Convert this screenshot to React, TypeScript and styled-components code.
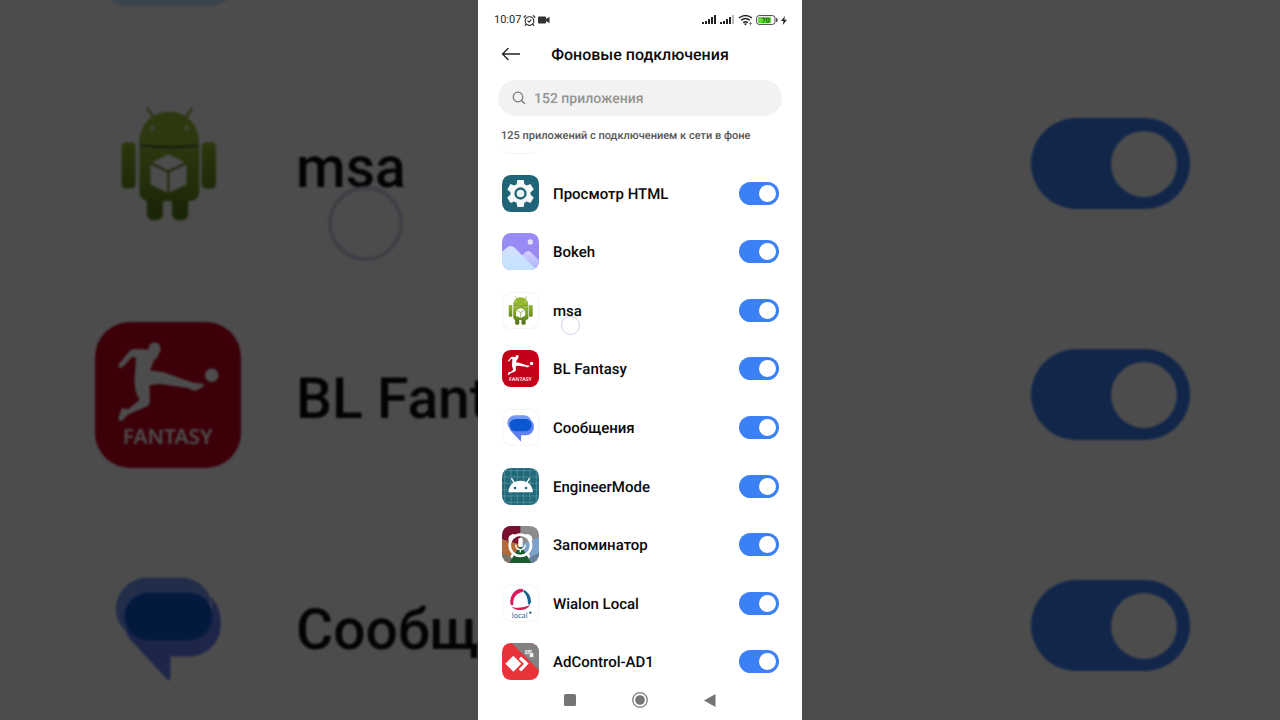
import React from "react";
import styled, { createGlobalStyle, css } from "styled-components";
import { AlarmClockCheck } from "lucide-react";

const GlobalStyle = createGlobalStyle`
  *, *::before, *::after { box-sizing: border-box; }
  body {
    margin: 0;
    background: #4c4c4c;
    font-family: Roboto, "Noto Sans", sans-serif;
    text-rendering: geometricPrecision;
    color: #0a0a0a;
  }
  button, input { font: inherit; text-rendering: inherit; }
`;

/* ---------- App icons ---------- */

const IconFrame = styled.svg<{ $outlined?: boolean }>`
  display: block;
  flex: none;
  width: var(--icon);
  height: var(--icon);
  border-radius: 24%;
  ${(p) => p.$outlined && css`box-shadow: inset 0 0 0 var(--outline) #f5f5f5;`}
`;

const GearIcon = () => (
  <IconFrame viewBox="0 0 111 111">
    <rect width="111" height="111" fill="#1f6577" />
    <path
      transform="translate(5.100 5.100) scale(4.200)"
      fill="#f6f8f9"
      d="M19.14 12.94c.04-.3.06-.61.06-.94 0-.32-.02-.64-.07-.94l2.03-1.58c.18-.14.23-.41.12-.61l-1.92-3.32c-.12-.22-.37-.29-.59-.22l-2.39.96c-.5-.38-1.03-.7-1.62-.94l-.36-2.54c-.04-.24-.24-.41-.48-.41h-3.84c-.24 0-.43.17-.47.41l-.36 2.54c-.59.24-1.13.57-1.62.94l-2.39-.96c-.22-.08-.47 0-.59.22L2.74 8.87c-.12.21-.08.47.12.61l2.03 1.58c-.05.3-.09.63-.09.94s.02.64.07.94l-2.03 1.58c-.18.14-.23.41-.12.61l1.92 3.32c.12.22.37.29.59.22l2.39-.96c.5.38 1.03.7 1.62.94l.36 2.54c.05.24.24.41.48.41h3.84c.24 0 .44-.17.47-.41l.36-2.54c.59-.24 1.13-.56 1.62-.94l2.39.96c.22.08.47 0 .59-.22l1.92-3.32c.12-.22.07-.47-.12-.61l-2.01-1.58z"
    />
    <circle cx="55.5" cy="55.5" r="15" fill="#eef3f5" stroke="#1f6577" strokeWidth="7" />
  </IconFrame>
);

const BokehIcon = () => (
  <IconFrame viewBox="0 0 111 111">
    <defs>
      <linearGradient id="sky" x1="0" y1="0" x2="1" y2="1">
        <stop offset="0" stopColor="#968df6" />
        <stop offset="1" stopColor="#9c86f2" />
      </linearGradient>
      <linearGradient id="peak" x1="0" y1="0" x2="0" y2="1">
        <stop offset="0" stopColor="#d3e1ff" />
        <stop offset="1" stopColor="#c3e2fd" />
      </linearGradient>
      <linearGradient id="rear" x1="0" y1="0" x2="0" y2="1">
        <stop offset="0" stopColor="#d6ccff" />
        <stop offset="1" stopColor="#a9b4fb" />
      </linearGradient>
    </defs>
    <rect width="111" height="111" fill="url(#sky)" />
    <path d="M40 90 68 59Q77 49 87 58L111 82V111H40Z" fill="url(#rear)" />
    <path d="M0 56 16 43Q27 34 38 44L104 111H0Z" fill="url(#peak)" />
    <circle cx="85" cy="27" r="8" fill="#e6defe" />
  </IconFrame>
);

const RobotIcon = () => (
  <IconFrame viewBox="0 0 434 434" $outlined>
    <defs>
      <linearGradient id="robot" x1="0" y1="0" x2="0" y2="1">
        <stop offset="0" stopColor="#93b82f" />
        <stop offset="1" stopColor="#648a1c" />
      </linearGradient>
    </defs>
    <path d="M157 53 177 82M287 53 268 82" stroke="#83a32c" strokeWidth="7" strokeLinecap="round" />
    <rect x="154" y="305" width="48" height="79" rx="18" fill="#5b7b1a" />
    <rect x="229" y="305" width="48" height="79" rx="18" fill="#5b7b1a" />
    <rect x="79" y="152" width="42" height="138" rx="14" fill="url(#robot)" />
    <rect x="317" y="152" width="43" height="138" rx="14" fill="url(#robot)" />
    <path d="M131 156C131 95 175 62 220 62S309 95 309 156Q300 166 220 166T131 156Z" fill="#94b92e" />
    <path d="M132 166Q220 174 310 166V296Q310 328 278 328H164Q132 328 132 296Z" fill="url(#robot)" />
    <path d="M132 159Q220 169 309 159V165Q220 175 132 165Z" fill="#3c5410" />
    <circle cx="170" cy="110" r="8" fill="#cfe0a4" />
    <circle cx="272" cy="110" r="8" fill="#cfe0a4" />
    <path d="M218 188 272 214V278L218 304 165 278V214Z" fill="#fff" />
    <path d="M165 214 218 240 272 214M218 240V304" fill="none" stroke="#5d7d1b" strokeWidth="6" />
  </IconFrame>
);

const FantasyIcon = () => (
  <IconFrame viewBox="0 0 434 434">
    <rect width="434" height="434" fill="#c30019" />
    <ellipse cx="177" cy="80" rx="18" ry="20" fill="#fff" />
    <path
      d="M70 126 100 90Q106 80 120 80L160 82 172 94 190 94 184 108 176 112 164 144 202 149 290 180 324 184Q324 194 314 196L297 206 277 196 192 184 162 188 163 236Q163 246 152 252L97 276 80 294Q72 296 69 287L80 256 98 260 132 232Q114 200 118 160L122 106 110 104 84 132 72 138Z"
      fill="#fff"
    />
    <circle cx="347" cy="158" r="20" fill="#fff" />
    <text x="216" y="364" textAnchor="middle" fontFamily="'Noto Sans', sans-serif" fontWeight="600" fontSize="62" fill="#fff">
      FANTASY
    </text>
  </IconFrame>
);

const MessagesIcon = () => (
  <IconFrame viewBox="0 0 434 434" $outlined>
    <path d="M156 73H255A94 94 0 0 1 341 129L349 180 90 232Q62 205 62 167A94 94 0 0 1 156 73Z" fill="#7297f6" />
    <path d="M341 129Q374 155 374 213A95 95 0 0 1 279 308H224V370Q224 384 214 375L100 252 90 232 200 200 340 200Q356 160 341 129Z" fill="#5f80f3" />
    <rect x="87" y="118" width="262" height="142" rx="71" fill="#0a57cf" />
  </IconFrame>
);

const EngineerIcon = () => (
  <IconFrame viewBox="0 0 111 111">
    <rect width="111" height="111" fill="#21687a" />
    <path
      d="M8 0V111M27 0V111M46 0V111M65 0V111M84 0V111M103 0V111M0 8H111M0 27H111M0 46H111M0 65H111M0 84H111M0 103H111"
      stroke="#5c97a4"
      strokeWidth="2"
    />
    <path d="M29 32 38 46M82 32 73 46" stroke="#fff" strokeWidth="4" strokeLinecap="round" />
    <path d="M19 73C21 49 36 38 56 38S91 49 93 73Z" fill="#fff" />
    <circle cx="39" cy="60" r="4" fill="#21687a" />
    <circle cx="72" cy="60" r="4" fill="#21687a" />
  </IconFrame>
);

const ReminderIcon = () => (
  <IconFrame viewBox="0 0 111 111">
    <rect width="111" height="111" fill="#8d8c8c" />
    <path d="M0 0H55V56L0 40Z" fill="#7a1030" />
    <path d="M0 40 55 56 22 111H0Z" fill="#b56b39" />
    <path d="M0 82 32 92 22 111H0Z" fill="#777569" />
    <path d="M111 34 55 56 88 111H111Z" fill="#7fa0cb" />
    <path d="M111 82 80 94 88 111H111Z" fill="#687f9c" />
    <path d="M55 56 22 111H88Z" fill="#1b5b2f" />
    <circle cx="55" cy="58" r="32" fill="none" stroke="#fff" strokeWidth="8" />
    <path d="M19 42Q18 27 34 24L40 26 21 46ZM91 42Q92 27 76 24L70 26 89 46Z" fill="#fff" />
    <path d="M34 83 29 92M76 83 81 92" stroke="#fff" strokeWidth="7" strokeLinecap="round" />
    <rect x="49" y="35" width="13" height="29" rx="6" fill="#fff" />
    <path d="M41 56Q42 71 55 71T70 56M55 71V79" fill="none" stroke="#fff" strokeWidth="4" />
  </IconFrame>
);

const WialonIcon = () => (
  <IconFrame viewBox="0 0 111 111" $outlined>
    <path d="M60 11C38 10 22 34 25 56Q29 65 34 59C32 38 44 24 62 21Q66 14 60 11Z" fill="#dd1c5c" />
    <path d="M65 14C80 22 88 36 87 52Q83 64 78 56C78 40 73 28 64 20Z" fill="#17658f" />
    <path d="M29 65Q53 74 84 60Q76 73 58 75Q38 76 29 65Z" fill="#d5204f" />
    <text x="53" y="99" textAnchor="middle" fontFamily="'Noto Sans', sans-serif" fontSize="22" fill="#1f668c">
      local
    </text>
    <path d="M85 79V87M81 83H89" stroke="#1f668c" strokeWidth="3" />
  </IconFrame>
);

const AdControlIcon = () => (
  <IconFrame viewBox="0 0 111 111">
    <rect width="111" height="111" fill="#e73339" />
    <path d="M29 0H111V82Z" fill="#828282" />
    <path d="M34 38 58 62 34 86 10 62Z" fill="#fff" />
    <path d="M54 44 73 62 54 82" fill="none" stroke="#fff" strokeWidth="10" />
    <rect x="69" y="21" width="20" height="13" rx="2" fill="#dedede" />
    <rect x="82" y="29" width="13" height="14" rx="2" fill="#fff" stroke="#828282" strokeWidth="2" />
    <path d="M76 21V34M69 27H82M85 35H92" stroke="#828282" strokeWidth="1" />
  </IconFrame>
);

/* ---------- Shared list parts ---------- */

const Row = styled.label`
  display: flex;
  flex: 1 0 var(--row);
  align-items: center;
  gap: var(--gap);
`;

const Name = styled.span`
  position: relative;
  flex: 1;
  padding-top: var(--drop);
  font-size: var(--text);
  font-weight: 500;
  line-height: 1;
  white-space: nowrap;
`;

const TouchDot = styled.span`
  position: absolute;
  top: var(--dot-top);
  left: var(--dot-left);
  width: var(--dot);
  height: var(--dot);
  border: var(--dot-line) solid #cfcfe6;
  border-radius: 50%;
  background: rgba(255, 255, 255, 0.8);
`;

const Switch = styled.input.attrs({ type: "checkbox", role: "switch" })`
  appearance: none;
  display: flex;
  flex: none;
  align-items: center;
  width: var(--switch-w);
  height: var(--switch-h);
  margin: 0;
  padding: 0 var(--switch-pad);
  border-radius: var(--switch-h);
  background: #c9ccd1;
  cursor: pointer;

  &::before {
    content: "";
    width: var(--knob);
    height: var(--knob);
    border-radius: 50%;
    background: #fff;
  }
  &:checked {
    justify-content: flex-end;
    background: #3c80f6;
  }
`;

/* ---------- Page ---------- */

const Page = styled.div`
  display: grid;
  grid-template-columns: minmax(0, 1fr);
  min-height: 100vh;
  overflow: hidden;
  background: #4c4c4c;
`;

const Backdrop = styled.div`
  --row: 231px;
  --icon: 146px;
  --outline: 2px;
  --gap: 55px;
  --text: 57px;
  --drop: 8px;
  --switch-w: 159px;
  --switch-h: 91px;
  --switch-pad: 13px;
  --knob: 66px;
  --dot: 75px;
  --dot-top: 55px;
  --dot-left: 32px;
  --dot-line: 4px;

  grid-area: 1 / 1;
  display: flex;
  flex-direction: column;
  justify-content: flex-end;
  height: 100vh;
  margin-bottom: -21px;
  padding: 0 90px 0 95px;
  background: #fff;
  filter: brightness(0.3) blur(1px);
  transform: translateY(21px);
`;

const Phone = styled.main`
  --row: 44px;
  --icon: 37px;
  --outline: 1px;
  --gap: 14px;
  --text: 15px;
  --drop: 2px;
  --switch-w: 40px;
  --switch-h: 23px;
  --switch-pad: 3px;
  --knob: 17px;
  --dot: 19px;
  --dot-top: 14px;
  --dot-left: 8px;
  --dot-line: 1px;

  position: relative;
  grid-area: 1 / 1;
  justify-self: center;
  display: flex;
  flex-direction: column;
  width: min(100%, 324px);
  min-height: 100vh;
  background: #fff;
`;

const StatusBar = styled.div`
  display: flex;
  align-items: center;
  gap: 3px;
  height: 40px;
  padding: 0 15px 0 16px;
  color: #222;
`;

const StatusGroup = styled.div`
  display: flex;
  flex: 1;
  align-items: center;
  gap: 2px;
`;

const Clock = styled.time`
  font-size: 11px;
  line-height: 16px;
`;

const TopBar = styled.header`
  display: grid;
  grid-template-columns: 26px 1fr 26px;
  align-items: center;
  height: 30px;
  margin: 0 20px 10px;
`;

const Title = styled.h1`
  margin: 0;
  font-size: 16px;
  font-weight: 500;
  line-height: 20px;
  text-align: center;
  white-space: nowrap;
`;

const IconButton = styled.button`
  display: flex;
  align-items: center;
  justify-content: center;
  height: 18px;
  padding: 0;
  border: 0;
  background: none;
  color: #222;
  cursor: pointer;
`;

const SearchBox = styled.label`
  display: flex;
  align-items: center;
  gap: 8px;
  height: 36px;
  margin: 0 20px;
  padding: 0 14px;
  border-radius: 18px;
  background: #f2f2f2;
  color: #777;
`;

const SearchInput = styled.input`
  flex: 1;
  min-width: 0;
  padding: 2px 0 0;
  border: 0;
  outline: 0;
  background: none;
  font-size: 14px;
  font-weight: 500;
  color: #222;

  &::placeholder {
    color: #949494;
    opacity: 1;
  }
`;

const Caption = styled.p`
  margin: 12px 23px 0;
  font-size: 11px;
  font-weight: 500;
  line-height: 16px;
  color: #555;
  white-space: nowrap;
`;

const ScrolledEdge = styled.div`
  width: 37px;
  height: 8px;
  margin: 2px 24px 10px;
  border-bottom: 1px solid #f2f2f2;
  border-radius: 0 0 9px 9px;
`;

const List = styled.div`
  display: flex;
  flex: 1;
  flex-direction: column;
  padding: 0 23px 0 24px;
`;

const NavBar = styled.nav`
  display: grid;
  grid-template-columns: repeat(3, 70px);
  justify-content: center;
  height: 29px;
`;

/* ---------- Status glyphs ---------- */

const Signal = ({ weak }: { weak?: boolean }) => (
  <svg width="15" height="10" viewBox="0 0 15 10" fill="#222" aria-hidden="true">
    <rect x="0" y="7" width="2" height="2" />
    <rect x="3" y="6" width="2" height="3" />
    <rect x="6" y="4" width="2" height="5" />
    <rect x="9" y="2" width="2" height="7" />
    <rect x="12" y="0" width="2" height="9" fill={weak ? "#bbb" : "#222"} />
  </svg>
);

const Wifi = () => (
  <svg width="15" height="12" viewBox="0 0 15 12" fill="none" stroke="#222" strokeWidth="1.4" aria-hidden="true">
    <path d="M1 4Q7.500-1 14 4M3 6.300Q7.500 2.800 12 6.300M5.200 8.600Q7.500 6.800 9.800 8.600" />
    <path d="M6 9.800Q7.500 8.800 9 9.800L7.500 11.500Z" fill="#222" stroke="none" />
    <path d="M11 9.500H14M12.500 8V11.500" stroke="#888" strokeWidth="1" />
  </svg>
);

const Battery = () => (
  <svg width="22" height="10" viewBox="0 0 22 10" aria-hidden="true">
    <rect x=".6" y=".6" width="18.400" height="8.800" rx="2.500" fill="#fff" stroke="#444" strokeWidth="1" />
    <rect x="2" y="2" width="13" height="6" rx="1" fill="#5fdc33" />
    <rect x="20" y="3" width="1.500" height="4" rx=".7" fill="#444" />
    <text x="9.800" y="7.600" textAnchor="middle" fontFamily="Roboto, sans-serif" fontWeight="700" fontSize="7" fill="#245c16">
      70
    </text>
  </svg>
);

const Camera = () => (
  <svg width="12" height="8" viewBox="0 0 12 8" fill="#333" aria-hidden="true">
    <path d="M1 .5H7Q8 .5 8 1.500V3L11.500 .7V7.300L8 5V6.500Q8 7.500 7 7.500H1Q0 7.500 0 6.500V1.500Q0 .5 1 .5Z" />
  </svg>
);

const Bolt = () => (
  <svg width="6" height="9" viewBox="0 0 6 9" fill="#222" aria-hidden="true">
    <path d="M4 0 0 5H2.500L1.800 9 6 3.700H3.300Z" />
  </svg>
);

/* ---------- Data ---------- */

type AppEntry = { name: string; Icon: () => React.JSX.Element; touched?: boolean };

const apps: AppEntry[] = [
  { name: "Просмотр HTML", Icon: GearIcon },
  { name: "Bokeh", Icon: BokehIcon },
  { name: "msa", Icon: RobotIcon, touched: true },
  { name: "BL Fantasy", Icon: FantasyIcon },
  { name: "Сообщения", Icon: MessagesIcon },
  { name: "EngineerMode", Icon: EngineerIcon },
  { name: "Запоминатор", Icon: ReminderIcon },
  { name: "Wialon Local", Icon: WialonIcon },
  { name: "AdControl-AD1", Icon: AdControlIcon },
];

const AppRow = ({ name, Icon, touched }: AppEntry) => (
  <Row>
    <Icon />
    <Name>
      {name}
      {touched && <TouchDot />}
    </Name>
    <Switch defaultChecked />
  </Row>
);

const BackdropRow = styled(Row)`
  flex: none;
  height: var(--row);
`;

export default function App() {
  return (
    <>
      <GlobalStyle />
      <Page>
        <Backdrop aria-hidden="true" inert>
          <BackdropRow as="div">
            <BokehIcon />
          </BackdropRow>
          {apps.slice(2, 5).map(({ name, Icon, touched }) => (
            <BackdropRow key={name}>
              <Icon />
              <Name>
                {name}
                {touched && <TouchDot />}
              </Name>
              <Switch defaultChecked tabIndex={-1} />
            </BackdropRow>
          ))}
        </Backdrop>

        <Phone>
          <StatusBar>
            <StatusGroup>
              <Clock>10:07</Clock>
              <AlarmClockCheck size={13} strokeWidth={2} />
              <Camera />
            </StatusGroup>
            <Signal />
            <Signal weak />
            <Wifi />
            <Battery />
            <Bolt />
          </StatusBar>

          <TopBar>
            <IconButton aria-label="Назад">
              <svg width="20" height="14" viewBox="0 0 20 14" fill="none" stroke="currentColor" strokeWidth="1.3">
                <path d="M19 6H1.500M7.500 0 1.500 6 7.500 12" />
              </svg>
            </IconButton>
            <Title>Фоновые подключения</Title>
          </TopBar>

          <SearchBox>
            <svg width="14" height="14" viewBox="0 0 14 14" fill="none" stroke="currentColor" strokeWidth="1.2" aria-hidden="true">
              <circle cx="6" cy="6" r="4.800" />
              <path d="M9.500 9.500 13 13" />
            </svg>
            <SearchInput type="text" placeholder="152 приложения" aria-label="Поиск приложений" />
          </SearchBox>

          <Caption>125 приложений с подключением к сети в фоне</Caption>
          <ScrolledEdge />

          <List>
            {apps.map((app) => (
              <AppRow key={app.name} {...app} />
            ))}
          </List>

          <NavBar>
            <IconButton aria-label="Недавние">
              <svg width="12" height="12" viewBox="0 0 12 12">
                <rect width="12" height="12" rx="1.500" fill="#757575" />
              </svg>
            </IconButton>
            <IconButton aria-label="Домой">
              <svg width="16" height="16" viewBox="0 0 16 16">
                <circle cx="8" cy="8" r="7.300" fill="none" stroke="#757575" strokeWidth="1.200" />
                <circle cx="8" cy="8" r="4.800" fill="#757575" />
              </svg>
            </IconButton>
            <IconButton aria-label="Назад в системе">
              <svg width="12" height="13" viewBox="0 0 12 13">
                <path d="M11.500 0V13L0 6.500Z" fill="#757575" />
              </svg>
            </IconButton>
          </NavBar>
        </Phone>
      </Page>
    </>
  );
}
